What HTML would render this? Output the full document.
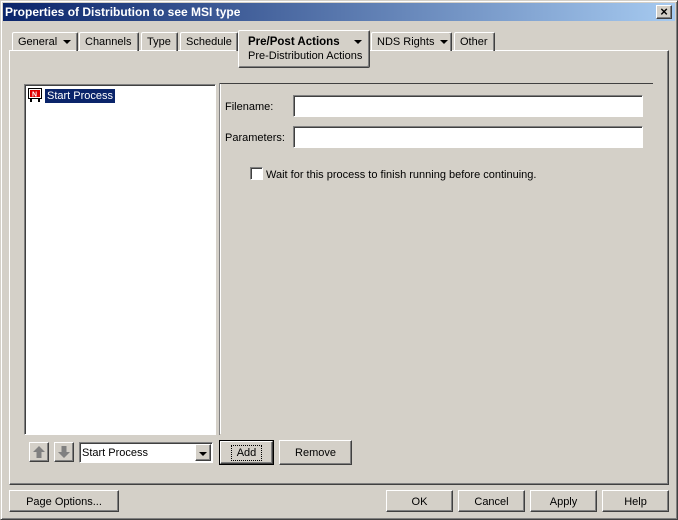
<!DOCTYPE html>
<html><head><style>
*{box-sizing:border-box;margin:0;padding:0}
body{width:678px;height:520px;background:#d4d0c8;font-family:"Liberation Sans",Arial,sans-serif;font-size:11px;color:#000;position:relative;overflow:hidden}
.a{position:absolute}
.win{left:0;top:0;width:678px;height:520px;border:1px solid;border-color:#d4d0c8 #404040 #404040 #d4d0c8;box-shadow:inset 1px 1px #fff,inset -1px -1px #808080}
.title{left:3px;top:3px;width:672px;height:18px;background:linear-gradient(90deg,#0a246a,#a6caf0);color:#fff;font-weight:bold;font-size:12px;line-height:18px;padding-left:2px}
.btn{border:1px solid;border-color:#fff #404040 #404040 #fff;box-shadow:inset -1px -1px #808080;text-align:center;background:#d4d0c8}
.tab{top:32px;height:19px;border:1px solid;border-color:#fff #404040 transparent #fff;border-bottom:none;box-shadow:inset -1px 0 #808080;line-height:19px;padding-left:5px;border-radius:2px 2px 0 0}
.sunk{border:1px solid;border-color:#808080 #fff #fff #808080;box-shadow:inset 1px 1px #404040;background:#fff}
.arr{display:inline-block;width:0;height:0;border-left:4px solid transparent;border-right:4px solid transparent;border-top:4px solid #000;vertical-align:middle;margin-left:6px}
</style></head><body>
<div class="a win"></div>
<div class="a title">Properties of Distribution to see MSI type</div>
<div class="a btn" style="left:656px;top:5px;width:16px;height:14px;font-size:13px;line-height:11px;font-weight:bold">×</div>

<div class="a" style="left:9px;top:50px;width:660px;height:435px;border:1px solid;border-color:#fff #404040 #404040 #fff;box-shadow:inset -1px -1px #808080"></div>

<div class="a tab" style="left:12px;width:66px">General<span class="arr"></span></div>
<div class="a tab" style="left:79px;width:60px">Channels</div>
<div class="a tab" style="left:141px;width:37px">Type</div>
<div class="a tab" style="left:180px;width:58px">Schedule</div>
<div class="a tab" style="left:371px;width:81px">NDS Rights<span class="arr"></span></div>
<div class="a tab" style="left:454px;width:41px">Other</div>
<div class="a" style="left:238px;top:30px;width:132px;height:38px;background:#d4d0c8;border:1px solid;border-color:#fff #404040 #404040 #fff;box-shadow:inset -1px -1px #808080;border-radius:2px;padding:4px 0 0 9px;line-height:14px">
<b style="font-size:11.5px">Pre/Post Actions</b><span class="arr" style="margin-left:14px"></span><br>Pre-Distribution Actions</div>

<div class="a" style="left:219px;top:83px;width:434px;height:1px;background:#404040"></div>
<div class="a" style="left:219px;top:83px;width:1px;height:352px;background:#808080"></div>
<div class="a" style="left:220px;top:84px;width:1px;height:350px;background:#fff"></div>

<div class="a sunk" style="left:24px;top:84px;width:192px;height:351px"></div>
<svg class="a" style="left:28px;top:88px" width="14" height="14"><rect x="0.5" y="0.5" width="13" height="10" fill="#fff" stroke="#000"/><rect x="2" y="2" width="10" height="7" fill="#e00000"/><text x="4" y="8.5" font-size="7" font-weight="bold" fill="#fff" font-family="Liberation Sans">N</text><rect x="2" y="11" width="2" height="3" fill="#000"/><rect x="10" y="11" width="2" height="3" fill="#000"/></svg>
<div class="a" style="left:45px;top:89px;height:14px;background:#0a246a;color:#fff;padding:0 2px;line-height:14px">Start Process</div>

<div class="a" style="left:225px;top:101px">Filename:</div>
<div class="a sunk" style="left:293px;top:95px;width:350px;height:22px"></div>
<div class="a" style="left:225px;top:132px">Parameters:</div>
<div class="a sunk" style="left:293px;top:126px;width:350px;height:22px"></div>
<div class="a sunk" style="left:250px;top:167px;width:13px;height:13px"></div>
<div class="a" style="left:266px;top:169px">Wait for this process to finish running before continuing.</div>

<div class="a btn" style="left:29px;top:442px;width:20px;height:20px"><svg width="18" height="18"><path d="M9 3 L15 9 H11.5 V15 H6.5 V9 H3Z" fill="#808080"/></svg></div>
<div class="a btn" style="left:54px;top:442px;width:20px;height:20px"><svg width="18" height="18"><path d="M9 15 L15 9 H11.5 V3 H6.5 V9 H3Z" fill="#808080"/></svg></div>
<div class="a sunk" style="left:79px;top:442px;width:134px;height:21px;padding:3px 0 0 2px;line-height:15px">Start Process</div>
<div class="a btn" style="left:195px;top:444px;width:16px;height:17px"><span class="arr" style="margin:5px 0 0 0"></span></div>
<div class="a" style="left:219px;top:440px;width:55px;height:25px;border:1px solid #000;"><div class="btn" style="width:53px;height:23px;line-height:23px"><span style="outline:1px dotted #000;padding:1px 5px">Add</span></div></div>
<div class="a btn" style="left:279px;top:440px;width:73px;height:25px;line-height:25px">Remove</div>

<div class="a btn" style="left:9px;top:490px;width:110px;height:22px;line-height:22px">Page Options...</div>
<div class="a btn" style="left:386px;top:490px;width:67px;height:22px;line-height:22px">OK</div>
<div class="a btn" style="left:458px;top:490px;width:67px;height:22px;line-height:22px">Cancel</div>
<div class="a btn" style="left:530px;top:490px;width:67px;height:22px;line-height:22px">Apply</div>
<div class="a btn" style="left:602px;top:490px;width:67px;height:22px;line-height:22px">Help</div>
</body></html>
